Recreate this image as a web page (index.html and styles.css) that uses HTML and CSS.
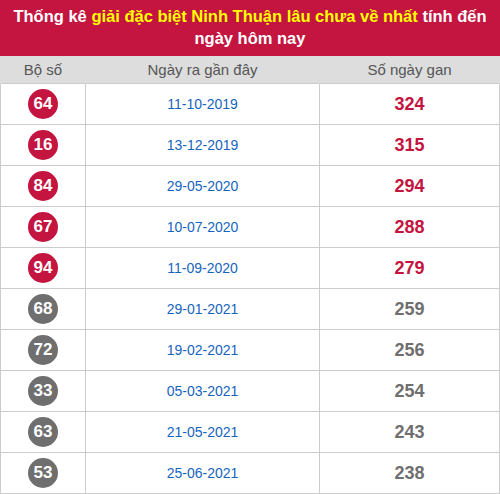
FILE: index.html
```html
<!DOCTYPE html>
<html>
<head>
<meta charset="utf-8">
<link rel="stylesheet" href="styles.css">
</head>
<body>
<div class="box">
  <div class="title">Thống kê <span class="hl">giải đặc biệt Ninh Thuận lâu chưa về nhất</span> tính đến ngày hôm nay</div>
  <table class="tbl">
    <thead>
      <tr><th class="c1">Bộ số</th><th class="c2">Ngày ra gần đây</th><th class="c3">Số ngày gan</th></tr>
    </thead>
    <tbody>
      <tr><td><span class="ball red">64</span></td><td class="date">11-10-2019</td><td class="gan red-t">324</td></tr>
      <tr><td><span class="ball red">16</span></td><td class="date">13-12-2019</td><td class="gan red-t">315</td></tr>
      <tr><td><span class="ball red">84</span></td><td class="date">29-05-2020</td><td class="gan red-t">294</td></tr>
      <tr><td><span class="ball red">67</span></td><td class="date">10-07-2020</td><td class="gan red-t">288</td></tr>
      <tr><td><span class="ball red">94</span></td><td class="date">11-09-2020</td><td class="gan red-t">279</td></tr>
      <tr><td><span class="ball gray">68</span></td><td class="date">29-01-2021</td><td class="gan gray-t">259</td></tr>
      <tr><td><span class="ball gray">72</span></td><td class="date">19-02-2021</td><td class="gan gray-t">256</td></tr>
      <tr><td><span class="ball gray">33</span></td><td class="date">05-03-2021</td><td class="gan gray-t">254</td></tr>
      <tr><td><span class="ball gray">63</span></td><td class="date">21-05-2021</td><td class="gan gray-t">243</td></tr>
      <tr><td><span class="ball gray">53</span></td><td class="date">25-06-2021</td><td class="gan gray-t">238</td></tr>
    </tbody>
  </table>
</div>
</body>
</html>
```
FILE: styles.css
```css
html, body {
  margin: 0;
  padding: 0;
  background: #fff;
}
body {
  font-family: "Liberation Sans", Arial, sans-serif;
}
.box {
  width: 500px;
}
.title {
  background: #c41440;
  color: #fff;
  font-weight: bold;
  font-size: 16.5px;
  line-height: 22px;
  text-align: center;
  padding: 5px 4px 5px;
  height: 46px;
}
.hl {
  color: #ffff00;
}
.tbl {
  width: 500px;
  border-collapse: collapse;
  table-layout: fixed;
}
.tbl th {
  background: #dddddd;
  color: #555;
  font-weight: normal;
  font-size: 15px;
  height: 27px;
  padding: 0;
  text-align: center;
  border-left: 1px solid #dddddd;
  border-right: 1px solid #dddddd;
}
.c1 { width: 84px; }
.c2 { width: 233px; }
.c3 { width: auto; }
.tbl td {
  border: 1px solid #cccccc;
  height: 40px;
  padding: 0;
  text-align: center;
  vertical-align: middle;
}
.ball {
  display: inline-flex;
  align-items: center;
  justify-content: center;
  width: 30px;
  height: 30px;
  border-radius: 50%;
  color: #fff;
  font-weight: bold;
  font-size: 17px;
  vertical-align: middle;
}
.ball.red { background: #c41440; }
.ball.gray { background: #6f6f6f; }
.date {
  color: #1565c0;
  font-size: 14px;
}
.gan {
  font-weight: bold;
  font-size: 18px;
}
.red-t { color: #c41440; }
.gray-t { color: #6f6f6f; }
```
